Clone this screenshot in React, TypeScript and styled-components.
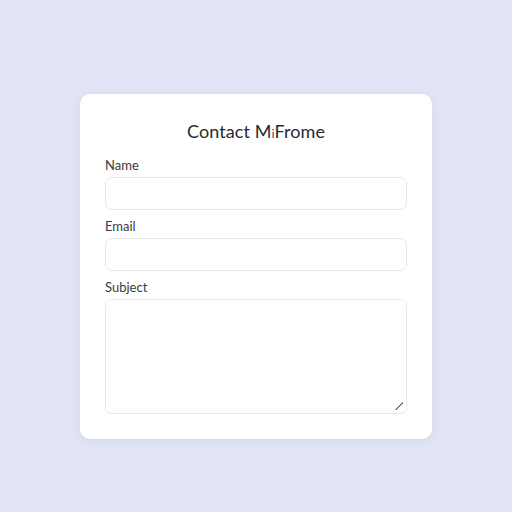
import React from "react"
import styled, { createGlobalStyle } from "styled-components"

const GlobalStyle = createGlobalStyle`
  html, body {
    margin: 0;
    padding: 0;
    background: #e0e4f4;
    font-family: "Lato", "Noto Sans", sans-serif;
  }
`

const S = {
  Page: styled.div`
    width: 512px;
    height: 512px;
    display: flex;
    justify-content: center;
    align-items: flex-start;
    padding-top: 94px;
    box-sizing: border-box;
  `,
  Card: styled.form`
    width: 352px;
    box-sizing: border-box;
    padding: 24px 25px 25px;
    background: #ffffff;
    border-radius: 10px;
    box-shadow: 0 2px 6px rgba(120, 130, 170, 0.12);
    display: flex;
    flex-direction: column;
  `,
  Title: styled.h1`
    margin: 0 0 10px;
    font-size: 18px;
    line-height: 26px;
    font-weight: 400;
    color: #2a2a2e;
    text-align: center;
    letter-spacing: 0.1px;
  `,
  Small: styled.span`
    font-size: 11px;
  `,
  Field: styled.label`
    display: flex;
    flex-direction: column;
    gap: 4px;
    margin-bottom: 8px;
    &:last-child {
      margin-bottom: 0;
    }
  `,
  Label: styled.span`
    font-size: 13px;
    line-height: 16px;
    color: #3a3a40;
  `,
  Input: styled.input`
    height: 33px;
    box-sizing: border-box;
    border: 1px solid #e8e9ef;
    border-radius: 7px;
    background: #fff;
    outline: none;
    padding: 0 10px;
    font-family: inherit;
  `,
  Area: styled.textarea`
    height: 115px;
    box-sizing: border-box;
    border: 1px solid #e8e9ef;
    border-radius: 7px;
    background: #fff;
    outline: none;
    padding: 8px 10px;
    font-family: inherit;
    resize: vertical;
    &::-webkit-resizer {
      background: linear-gradient(
          135deg,
          transparent 44%,
          #808086 44%,
          #808086 58%,
          transparent 58%
        )
        no-repeat center / 8px 8px;
    }
  `,
}

export default function App() {
  return (
    <>
      <GlobalStyle />
      <S.Page>
        <S.Card onSubmit={(e) => e.preventDefault()}>
          <S.Title>
            Contact M<S.Small>i</S.Small>Frome
          </S.Title>
          <S.Field>
            <S.Label>Name</S.Label>
            <S.Input type="text" />
          </S.Field>
          <S.Field>
            <S.Label>Email</S.Label>
            <S.Input type="email" />
          </S.Field>
          <S.Field>
            <S.Label>Subject</S.Label>
            <S.Area />
          </S.Field>
        </S.Card>
      </S.Page>
    </>
  )
}
